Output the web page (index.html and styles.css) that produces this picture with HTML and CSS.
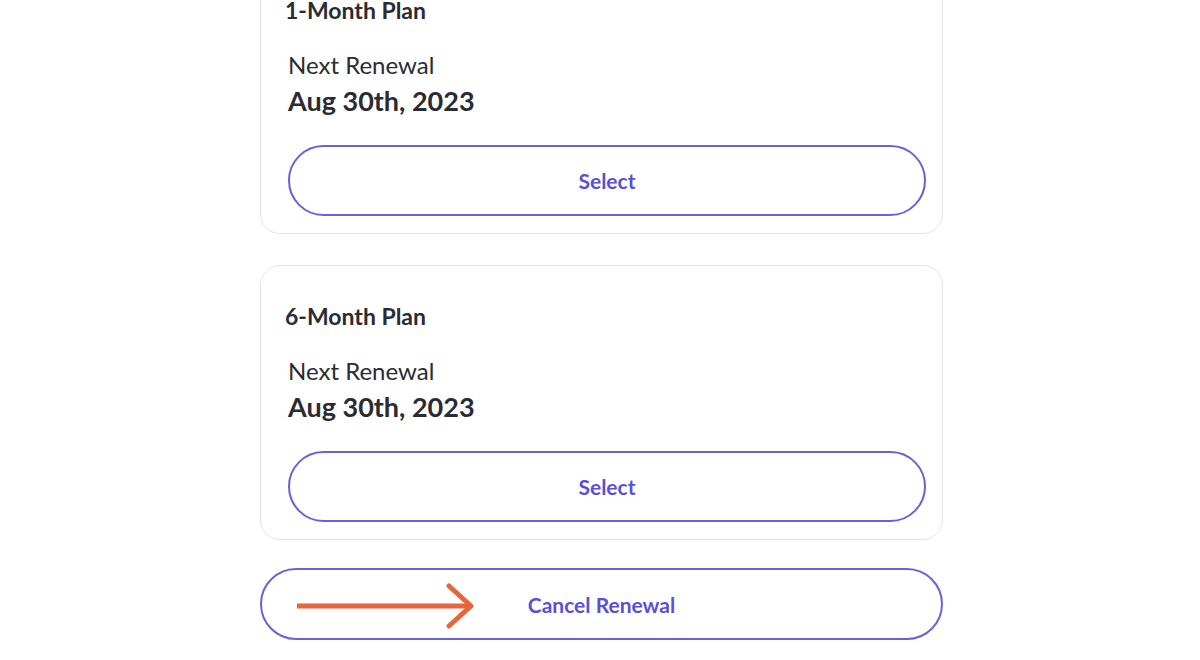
FILE: index.html
```html
<!DOCTYPE html>
<html>
<head>
	<title>Plans</title>
	<link rel="stylesheet" href="styles.css">
</head>
<body>
	<div class="plans">
		<div class="plan">
			<div class="plan-title">1-Month Plan</div>
			<div class="renew-label">Next Renewal</div>
			<div class="renew-date">Aug 30th, 2023</div>
			<button class="btn-select">Select</button>
		</div>

		<div class="plan">
			<div class="plan-title">6-Month Plan</div>
			<div class="renew-label">Next Renewal</div>
			<div class="renew-date">Aug 30th, 2023</div>
			<button class="btn-select">Select</button>
		</div>

		<div class="cancel-wrap">
			<button class="btn-cancel">Cancel Renewal</button>
			<svg class="arrow" width="184" height="46" viewBox="0 0 184 46">
				<path d="M2 23 H176" stroke="#e8643c" stroke-width="5" fill="none"/>
				<path d="M154 3 L176 23 L154 43" stroke="#e8643c" stroke-width="5" fill="none" stroke-linecap="round" stroke-linejoin="round"/>
			</svg>
		</div>
	</div>
</body>
</html>
```

FILE: styles.css
```css
body{
	margin: 0;
	background: #fff;
	font-family: Lato, "Noto Sans", sans-serif;
	color: #2b2b33;
	overflow: hidden;
}

.plans{
	width: 683px;
	margin: -41px auto 0 260px;
	display: flex;
	flex-direction: column;
	gap: 31px;
}

.plan{
	border: 1px solid #e4e4e8;
	border-radius: 20px;
	padding: 36px 16px 17px 27px;
	display: flex;
	flex-direction: column;
}

.plan-title{
	font-size: 23px;
	font-weight: 700;
	line-height: 28px;
	margin-left: -3px;
}

.renew-label{
	font-size: 24px;
	font-weight: 400;
	line-height: 28px;
	margin-top: 27px;
}

.renew-date{
	font-size: 27px;
	font-weight: 700;
	line-height: 32px;
	margin-top: 6px;
}

.btn-select{
	margin-top: 28px;
	height: 71px;
	border: 2px solid #6a5fdc;
	border-radius: 36px;
	background: #fff;
	color: #5a4fd6;
	font-family: Lato, "Noto Sans", sans-serif;
	font-size: 21px;
	font-weight: 700;
}

.cancel-wrap{
	position: relative;
	margin-top: -3px;
}

.btn-cancel{
	width: 100%;
	height: 72px;
	border: 2px solid #6a5fdc;
	border-radius: 36px;
	background: #fff;
	color: #5a4fd6;
	font-family: Lato, "Noto Sans", sans-serif;
	font-size: 21px;
	font-weight: 700;
}

.arrow{
	position: absolute;
	left: 35px;
	top: 15px;
}
```
